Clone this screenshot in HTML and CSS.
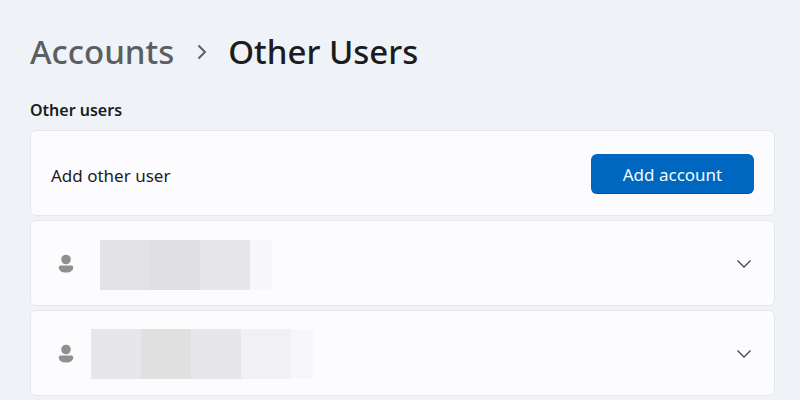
FILE: index.html
```html
<!DOCTYPE html>
<html lang="en">
<head>
<meta charset="utf-8">
<meta name="viewport" content="width=device-width, initial-scale=1">
<title>Other Users</title>
<link rel="stylesheet" href="styles.css">
</head>
<body>
<main class="page">
  <nav class="breadcrumb" aria-label="Breadcrumb">
    <a class="crumb" href="#">Accounts</a>
    <svg class="crumb-arrow" viewBox="0 0 10 16" aria-hidden="true"><path d="M1.5 1.5 8 8l-6.500 6.500"/></svg>
    <h1 class="title">Other Users</h1>
  </nav>
  <h2 class="section-title">Other users</h2>
  <div class="cards">
    <section class="card">
      <span class="label">Add other user</span>
      <button class="add" type="button">Add account</button>
    </section>
    <section class="card">
      <svg class="person" viewBox="0 0 16 20" aria-hidden="true"><circle cx="8" cy="5.500" r="4.800"/><path d="M2.500 11.500h11q1.700 0 1.700 1.700C15.200 17 12 18.500 8 18.500S.8 17 .8 13.200q0-1.700 1.700-1.700z"/></svg>
      <div class="redacted first"><i class="block a"></i><i class="block b"></i><i class="block c"></i><i class="block tail"></i></div>
      <button class="expand" type="button" aria-label="Expand first user"><svg class="chevron" viewBox="0 0 16 10" aria-hidden="true"><path d="m1.500 1.500 6.500 6.500 6.500-6.500"/></svg></button>
    </section>
    <section class="card">
      <svg class="person" viewBox="0 0 16 20" aria-hidden="true"><circle cx="8" cy="5.500" r="4.800"/><path d="M2.500 11.500h11q1.700 0 1.700 1.700C15.200 17 12 18.500 8 18.500S.8 17 .8 13.200q0-1.700 1.700-1.700z"/></svg>
      <div class="redacted second"><i class="block c"></i><i class="block d"></i><i class="block c"></i><i class="block e"></i><i class="block tail"></i></div>
      <button class="expand" type="button" aria-label="Expand second user"><svg class="chevron" viewBox="0 0 16 10" aria-hidden="true"><path d="m1.500 1.500 6.500 6.500 6.500-6.500"/></svg></button>
    </section>
  </div>
</main>
</body>
</html>
```
FILE: styles.css
```css
* { box-sizing: border-box; }
body {
  margin: 0;
  background: #eff3f8;
  color: #1b1c1f;
  font-family: "Segoe UI", "Noto Sans", "Open Sans", sans-serif;
  font-size: 17px;
  line-height: 24px;
}
.page { padding: 28px 25px 4px 30px; }
.breadcrumb { display: flex; align-items: center; }
.crumb, .title {
  margin: 0;
  font-size: 33px;
  line-height: 48px;
  font-weight: 500;
}
.crumb { color: #5c5f62; text-decoration: none; }
.crumb-arrow {
  width: 12px;
  height: 16px;
  margin: 0 20px 0 22px;
  fill: none;
  stroke: #5c5f66;
  stroke-width: 2;
}
.section-title {
  margin: 22px 0 8px;
  font-size: 16px;
  line-height: 24px;
  font-weight: 600;
}
.cards { display: grid; gap: 4px; }
.card {
  display: flex;
  align-items: center;
  min-height: 86px;
  padding: 2px 20px 0;
  background: #fcfcfe;
  border: 1px solid #e3e6eb;
  border-radius: 6px;
}
.label { flex: 1; padding-top: 4px; }
.add {
  width: 163px;
  height: 40px;
  padding: 2px 0 0;
  border: 0;
  border-bottom: 1px solid #0053a0;
  border-radius: 6px;
  background: #0067c0;
  color: #f3fbff;
  font: inherit;
}
.person {
  width: 18px;
  height: 20px;
  margin-left: 6px;
  fill: #8f8f90;
}
.redacted { display: flex; margin-right: auto; }
.first { margin-left: 25px; padding-top: 2px; }
.second { margin-left: 16px; }
.block { width: 50px; height: 50px; }
.a { background: #e3e3e5; }
.b { background: #e0e0e2; }
.c { background: #e7e7e9; }
.d { background: #e0e0e0; }
.e { background: #f1f1f3; }
.tail { width: 22px; background: #f7f7f9; }
.expand {
  display: flex;
  padding: 2px;
  border: 0;
  background: none;
}
.chevron {
  width: 16px;
  height: 10px;
  fill: none;
  stroke: #45474b;
  stroke-width: 1.300;
}
```
